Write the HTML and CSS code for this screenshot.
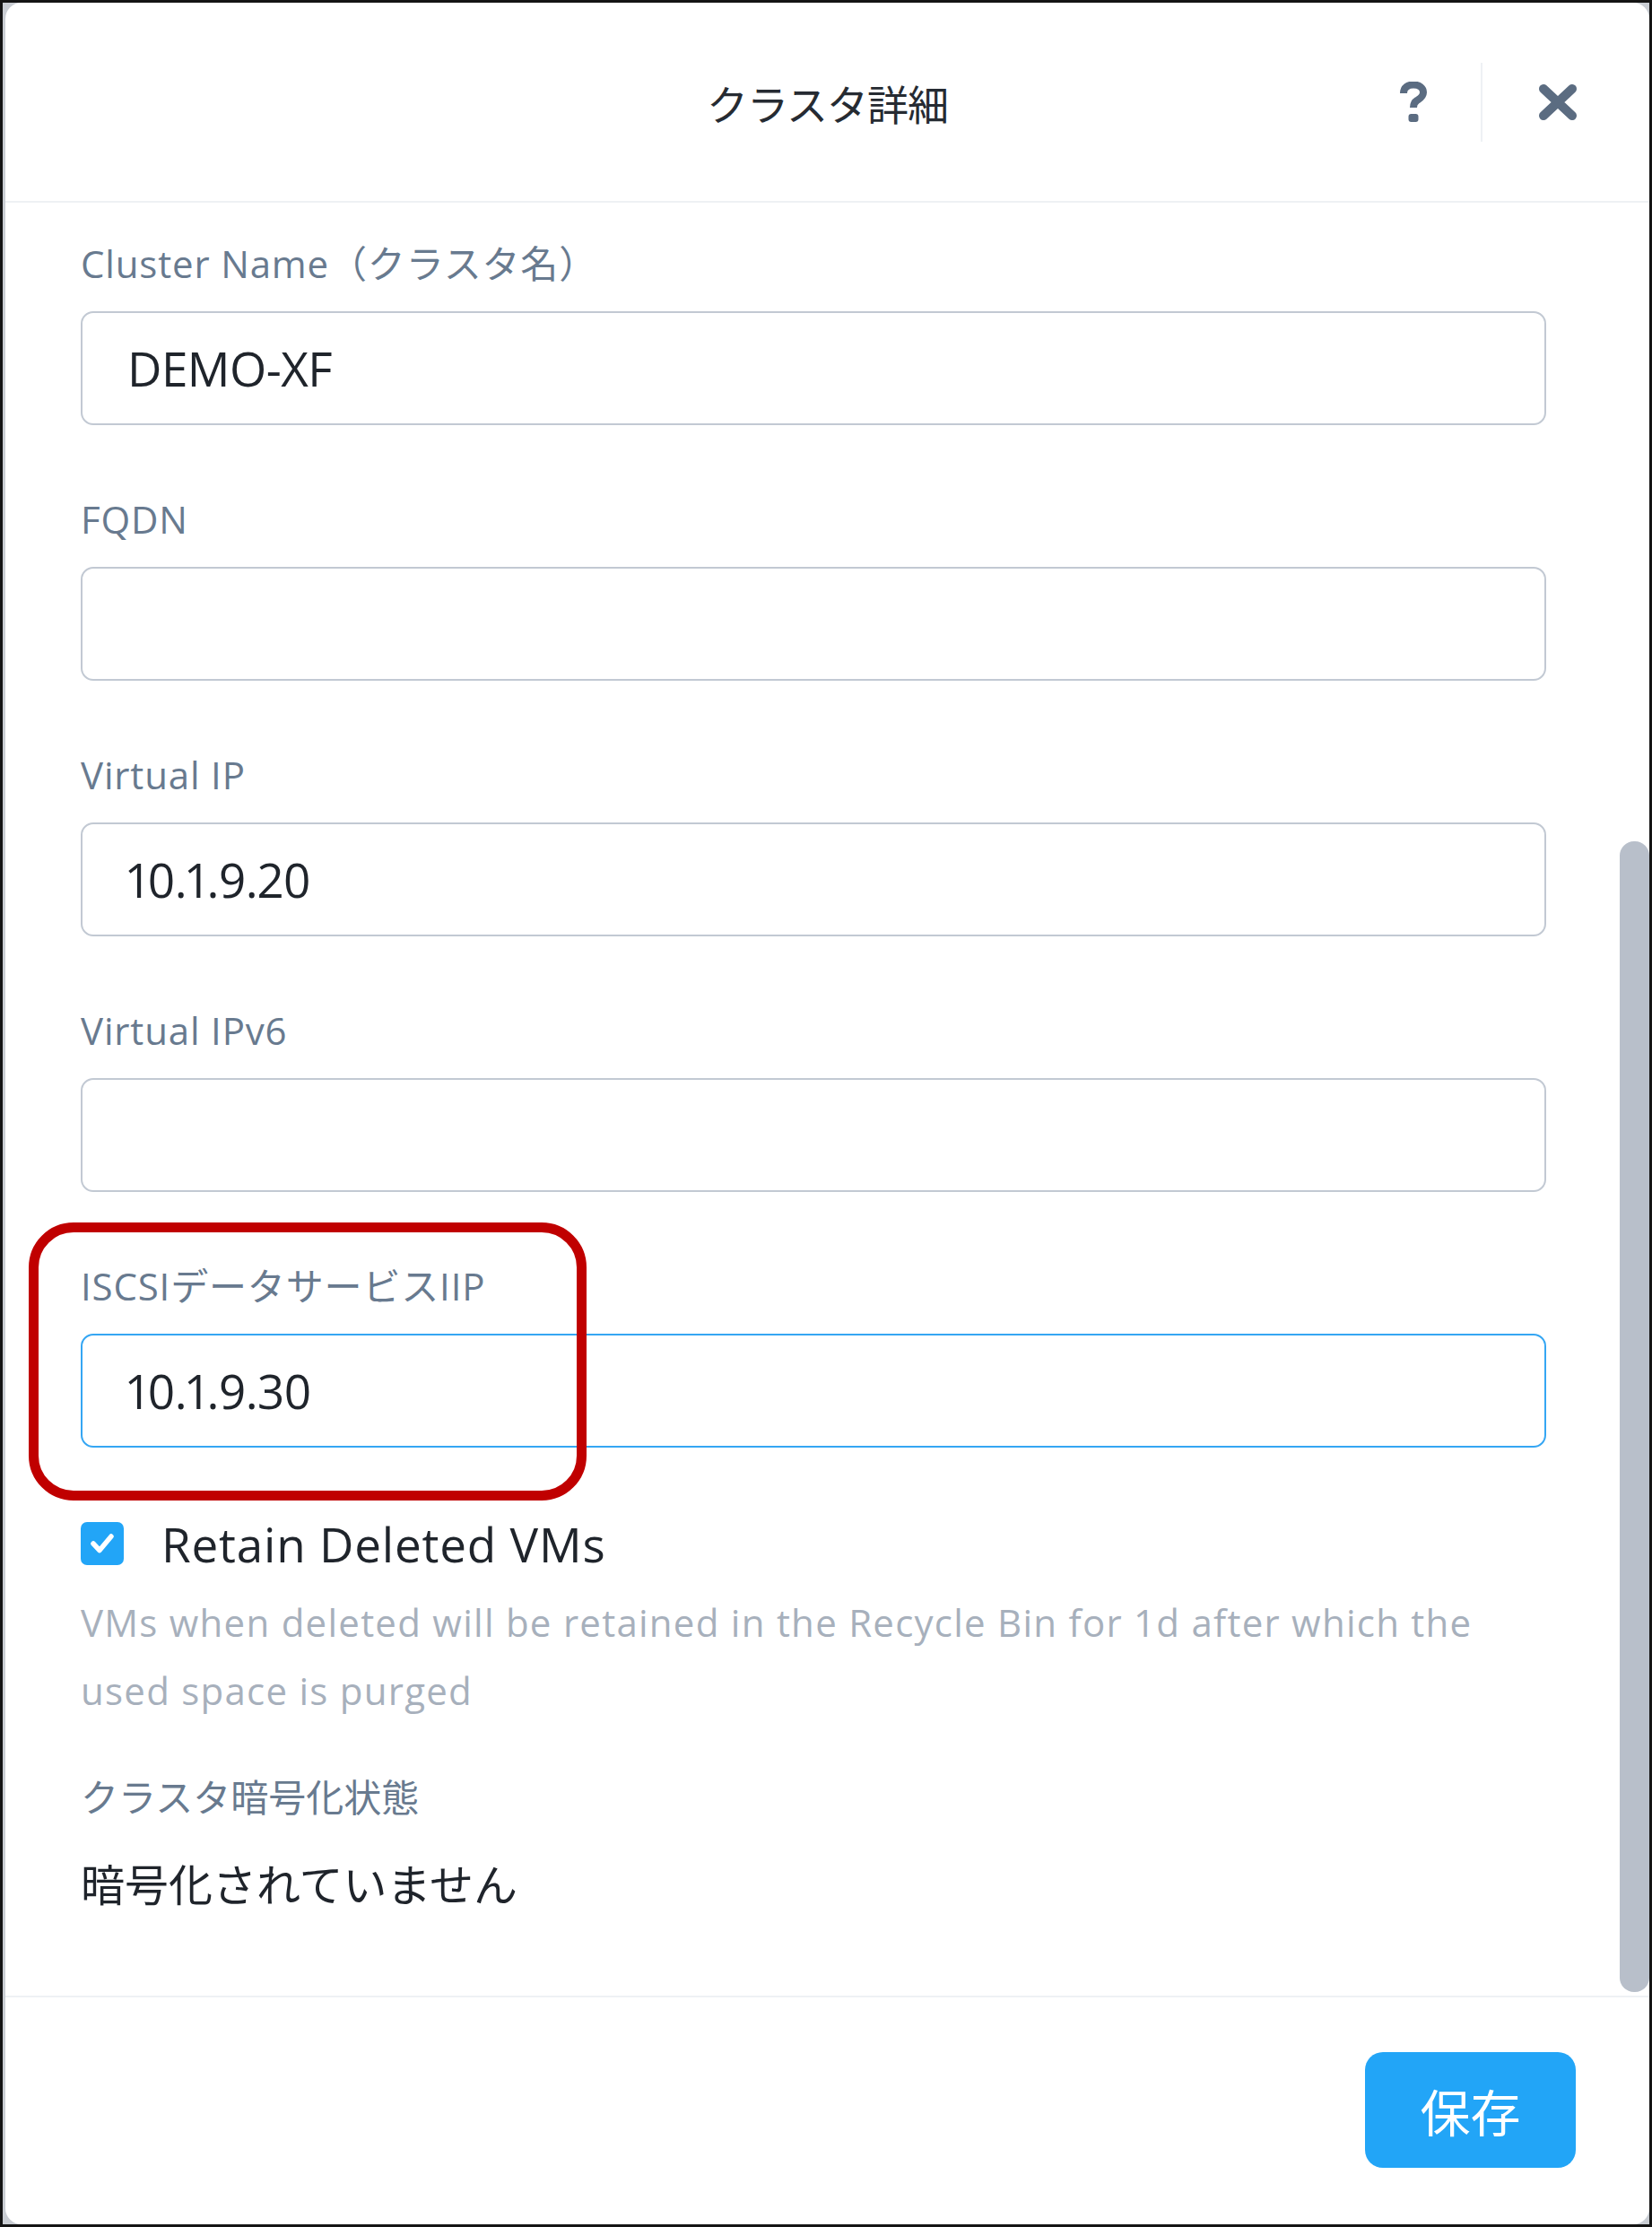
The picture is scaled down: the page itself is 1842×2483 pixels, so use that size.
FILE: index.html
```html
<!DOCTYPE html>
<html lang="ja">
<head>
    <meta charset="UTF-8">
    <meta name="viewport" content="width=device-width, initial-scale=1.0">
    <title>クラスタ詳細</title>
    <link rel="stylesheet" href="styles.css">
</head>
<body>

<div class="frame">
    <div class="modal">
        <header class="modal-header">
            <div></div>
            <h1 class="title">クラスタ詳細</h1>
            <div class="header-actions">
                <button class="icon-btn help-btn" title="Help">
                    <svg width="32" height="46" viewBox="0 0 32 46">
                        <path d="M5 13 C5 6 10 3.5 16 3.5 C22.5 3.5 27 7 27 12 C27 17 23 19 20 21 C17.5 22.5 16 24.5 16 29" fill="none" stroke="#5b6c81" stroke-width="8"/>
                        <rect x="10.5" y="36" width="11" height="9" rx="3" fill="#5b6c81"/>
                    </svg>
                </button>
                <span class="divider"></span>
                <button class="icon-btn close-btn" title="Close">
                    <svg width="44" height="40" viewBox="0 0 44 40">
                        <path d="M6 5 L38 35 M38 5 L6 35" stroke="#5b6c81" stroke-width="10" stroke-linecap="round"/>
                    </svg>
                </button>
            </div>
        </header>

        <div class="modal-body">
            <div class="content">
                <div class="field">
                    <label class="field-label">Cluster Name（クラスタ名）</label>
                    <input class="field-input" type="text" value="DEMO-XF">
                </div>
                <div class="field">
                    <label class="field-label">FQDN</label>
                    <input class="field-input" type="text" value="">
                </div>
                <div class="field">
                    <label class="field-label">Virtual IP</label>
                    <input class="field-input" type="text" value="10.1.9.20">
                </div>
                <div class="field">
                    <label class="field-label">Virtual IPv6</label>
                    <input class="field-input" type="text" value="">
                </div>
                <div class="field">
                    <label class="field-label">ISCSIデータサービスIIP</label>
                    <input class="field-input focused" type="text" value="10.1.9.30">
                </div>

                <label class="check-row">
                    <span class="checkbox">
                        <svg width="32" height="28" viewBox="0 0 32 28">
                            <path d="M6 14 L13 21.5 L26 6" fill="none" stroke="#fff" stroke-width="5.5" stroke-linecap="round" stroke-linejoin="round"/>
                        </svg>
                    </span>
                    <span class="check-text">Retain Deleted VMs</span>
                </label>
                <p class="hint">VMs when deleted will be retained in the Recycle Bin for 1d after which the used space is purged</p>

                <div class="status-label">クラスタ暗号化状態</div>
                <div class="status-value">暗号化されていません</div>
            </div>

            <!-- scrollbar -->
            <div class="scroll-track">
                <div class="scroll-thumb"></div>
            </div>
        </div>

        <footer class="modal-footer">
            <button class="save-btn">保存</button>
        </footer>
    </div>

    <!-- red callout around the iSCSI field -->
    <div class="callout"></div>
</div>

</body>
</html>
```

FILE: styles.css
```css
body {
    margin: 0;
    padding: 0;
    font-family: "Open Sans", "Noto Sans CJK JP", sans-serif;
    background-color: #fff;
}

.frame {
    position: relative;
    width: 1842px;
    height: 2483px;
    box-sizing: border-box;
    border: 3px solid #141414;
    padding-left: 3px;
    background-color: #c9cdd3;
    display: flex;
}

.modal {
    flex: 1;
    display: flex;
    flex-direction: column;
    background-color: #fff;
    border-radius: 18px;
    overflow: hidden;
}

/* header */
.modal-header {
    height: 223px;
    box-sizing: border-box;
    border-bottom: 2px solid #eef1f4;
    display: grid;
    grid-template-columns: 1fr auto 1fr;
    align-items: center;
}

.title {
    margin: 0;
    font-family: "Noto Sans CJK JP", sans-serif;
    font-size: 46px;
    font-weight: 400;
    color: #262b32;
    letter-spacing: -1px;
}

.header-actions {
    display: flex;
    justify-content: flex-end;
    align-items: center;
    padding-right: 80px;
}

.icon-btn {
    background: none;
    border: none;
    padding: 0;
    cursor: pointer;
    display: flex;
}

.divider {
    width: 2px;
    height: 88px;
    background-color: #eef1f4;
    margin: 0 62px 0 59px;
}

/* body */
.modal-body {
    flex: 1;
    display: flex;
}

.content {
    flex: 1;
    padding: 38px 82px 0 84px;
}

.field {
    display: flex;
    flex-direction: column;
    margin-bottom: 75px;
}

.field-label {
    font-size: 42px;
    line-height: 60px;
    letter-spacing: 0.02em;
    color: #687a8f;
    margin-bottom: 23px;
}

.field-input {
    height: 127px;
    box-sizing: border-box;
    border: 2px solid #c2c9d3;
    border-radius: 14px;
    padding: 0 50px;
    font-family: "Open Sans", sans-serif;
    font-size: 53px;
    font-variant-numeric: proportional-nums;
    letter-spacing: -0.01em;
    color: #1f242b;
    outline: none;
}

.field-input.focused {
    border-color: #35a6f3;
}

.check-row {
    display: flex;
    align-items: center;
    height: 64px;
}

.checkbox {
    width: 48px;
    height: 48px;
    border-radius: 7px;
    background-color: #22a5f7;
    display: flex;
    align-items: center;
    justify-content: center;
    margin-right: 42px;
}

.check-text {
    font-size: 53px;
    font-weight: 500;
    letter-spacing: 0.015em;
    color: #1f242b;
}

.hint {
    margin: 18px 0 0;
    font-size: 42px;
    line-height: 76px;
    letter-spacing: 0.03em;
    color: #a7b0bc;
}

.status-label {
    margin-top: 49px;
    font-family: "Noto Sans CJK JP", sans-serif;
    font-size: 42px;
    line-height: 60px;
    color: #687a8f;
}

.status-value {
    margin-top: 32px;
    font-family: "Noto Sans CJK JP", sans-serif;
    font-size: 49px;
    line-height: 70px;
    color: #1f242b;
}

.scroll-track {
    width: 33px;
    display: flex;
    flex-direction: column;
}

.scroll-thumb {
    flex: 1;
    margin: 712px 0 4px;
    background-color: #b8bfca;
    border-radius: 16px;
}

/* footer */
.modal-footer {
    height: 255px;
    box-sizing: border-box;
    border-top: 2px solid #eef1f4;
    display: flex;
    justify-content: flex-end;
    align-items: flex-start;
    padding: 61px 82px 0 0;
}

.save-btn {
    width: 235px;
    height: 129px;
    background-color: #22a5f7;
    color: #fff;
    border: none;
    border-radius: 20px;
    font-family: "Noto Sans CJK JP", sans-serif;
    font-size: 56px;
    cursor: pointer;
}

.callout {
    position: absolute;
    left: 29px;
    top: 1360px;
    width: 622px;
    height: 310px;
    box-sizing: border-box;
    border: 11px solid #c00000;
    border-radius: 50px;
}
```
